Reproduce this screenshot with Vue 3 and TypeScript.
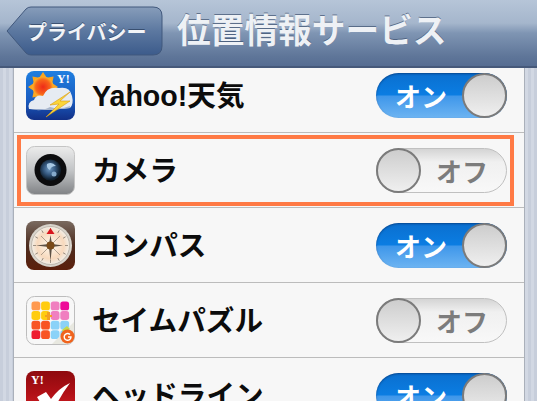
<script setup lang="ts">
type AppRow = { id: string; name: string; on: boolean; active?: boolean }

const rows: AppRow[] = [
  { id: 'weather', name: 'Yahoo!天気', on: true },
  { id: 'camera', name: 'カメラ', on: false, active: true },
  { id: 'compass', name: 'コンパス', on: true },
  { id: 'puzzle', name: 'セイムパズル', on: false },
  { id: 'headline', name: 'ヘッドライン', on: true },
]

const puzzleColors = [
  '#ff9a50', '#ffcc10', '#f07fc0', '#ee0a98',
  '#ffcc10', '#ffcc10', '#f07fc0', '#f07fc0',
  '#f85424', '#f85424', '#8ad2f8', '#8ad2f8',
  '#ee1c30', '#f85424', '#8ad2f8', '#8ad2f8',
]
const sunRays = [0, 45, 90, 135, 180, 225, 270, 315]
const compassTicks = [0, 30, 60, 90, 120, 150, 180, 210, 240, 270, 300, 330]
</script>

<template>
  <div class="screen">
    <header class="navbar">
      <button class="back" type="button">
        <svg class="back-shape" viewBox="0 0 157 50" width="157" height="50">
          <defs>
            <linearGradient id="backFill" x1="0" y1="0" x2="0" y2="1">
              <stop offset="0" stop-color="#879dba" />
              <stop offset="0.5" stop-color="#5c78a0" />
              <stop offset="1" stop-color="#3c5b8b" />
            </linearGradient>
          </defs>
          <path
            d="M1 25 L20 3 Q22 1 25 1 H147 Q156 1 156 10 V40 Q156 49 147 49 H25 Q22 49 20 47 Z"
            fill="url(#backFill)"
            stroke="#41587c"
            stroke-width="1"
          />
        </svg>
        <span class="back-label">プライバシー</span>
      </button>
      <h1 class="title">位置情報サービス</h1>
    </header>

    <div class="viewport">
      <ul class="list">
        <li v-for="row in rows" :key="row.id" class="row" :class="{ 'row-active': row.active }">
          <svg class="icon" viewBox="0 0 49 49" width="49" height="49">
            <template v-if="row.id === 'weather'">
              <defs>
                <linearGradient id="wxSky" x1="0" y1="0" x2="0" y2="1">
                  <stop offset="0" stop-color="#1f7fe0" />
                  <stop offset="0.6" stop-color="#1a5cc0" />
                  <stop offset="1" stop-color="#122f86" />
                </linearGradient>
                <radialGradient id="wxSun">
                  <stop offset="0" stop-color="#ee2a18" />
                  <stop offset="0.7" stop-color="#f8661a" />
                  <stop offset="1" stop-color="#fdb52a" />
                </radialGradient>
              </defs>
              <rect width="49" height="49" rx="8" fill="url(#wxSky)" />
              <g transform="translate(17 16)">
                <path
                  v-for="a in sunRays"
                  :key="a"
                  d="M-4 -9 L0 -15 L4 -9 Z"
                  fill="#fba51e"
                  :transform="`rotate(${a})`"
                />
                <circle r="10.5" fill="url(#wxSun)" />
              </g>
              <path
                d="M3 38 Q1 31 8 29 Q10 23 17 25 Q21 15 33 17 Q44 15 46 25 Q48 33 44 37 L24 39 Z"
                fill="#e6ebf2"
              />
              <path d="M4 38 Q16 41 24 36 Q34 39 44 35 L44 37 L24 39 Z" fill="#a8b6cc" />
              <path d="M44 21 L24 34 L33 33 L20 46 L44 30 L34 30 Z" fill="#fbd53a" stroke="#d89a10" stroke-width="0.6" />
              <text x="31" y="12" class="yahoo-mark">Y!</text>
            </template>

            <template v-else-if="row.id === 'camera'">
              <defs>
                <linearGradient id="camBody" x1="0" y1="0" x2="0" y2="1">
                  <stop offset="0" stop-color="#ececec" />
                  <stop offset="0.5" stop-color="#c2c4c6" />
                  <stop offset="1" stop-color="#808285" />
                </linearGradient>
                <radialGradient id="camLens" cx="0.45" cy="0.45">
                  <stop offset="0" stop-color="#6f9bc4" />
                  <stop offset="0.55" stop-color="#35587f" />
                  <stop offset="1" stop-color="#10202f" />
                </radialGradient>
              </defs>
              <rect x="0.5" y="0.5" width="48" height="48" rx="8" fill="url(#camBody)" stroke="#c4c4c4" />
              <circle cx="24.5" cy="24" r="16" fill="#0c0c0e" />
              <circle cx="24.5" cy="24" r="10.5" fill="url(#camLens)" />
              <path d="M21 18 Q26 15 30 20 Q25 20 24 24 Q20 22 21 18 Z" fill="#a7c8e4" />
              <circle cx="28" cy="28" r="2.5" fill="#86aacb" />
            </template>

            <template v-else-if="row.id === 'compass'">
              <defs>
                <linearGradient id="cmpFrame" x1="0" y1="0" x2="0" y2="1">
                  <stop offset="0" stop-color="#7a6a60" />
                  <stop offset="0.5" stop-color="#4c2c1e" />
                  <stop offset="1" stop-color="#5c200c" />
                </linearGradient>
                <radialGradient id="cmpDial">
                  <stop offset="0" stop-color="#fffaf0" />
                  <stop offset="0.7" stop-color="#f7d9bd" />
                  <stop offset="1" stop-color="#f2efe8" />
                </radialGradient>
              </defs>
              <rect width="49" height="49" rx="8" fill="url(#cmpFrame)" />
              <circle cx="24.5" cy="24.5" r="21.5" fill="#d8d4cc" />
              <circle cx="24.5" cy="24.5" r="19" fill="url(#cmpDial)" stroke="#a89e90" stroke-width="0.6" />
              <line
                v-for="a in compassTicks"
                :key="a"
                x1="24.5"
                y1="7"
                x2="24.5"
                y2="10"
                stroke="#8a7d70"
                stroke-width="0.8"
                :transform="`rotate(${a} 24.5 24.5)`"
              />
              <path d="M24.5 7 L28.5 13 L20.5 13 Z" fill="#d8141c" />
              <path d="M24.5 14 L26 23 L37 24.5 L26 26 L24.5 40 L23 26 L10 24.5 L23 23 Z" fill="#5d5145" />
              <path d="M15 15 L34 34 M34 15 L15 34" stroke="#9a8d7e" stroke-width="0.8" />
              <circle cx="24.5" cy="24.5" r="4" fill="#7a4a18" />
            </template>

            <template v-else-if="row.id === 'puzzle'">
              <rect x="0.5" y="0.5" width="48" height="48" rx="8" fill="#f7f7f7" stroke="#bdbdbd" />
              <rect
                v-for="(color, i) in puzzleColors"
                :key="i"
                :x="5.5 + (i % 4) * 9.6"
                :y="5.5 + Math.floor(i / 4) * 9.6"
                width="8.8"
                height="8.8"
                rx="2.6"
                :fill="color"
              />
              <path d="M21 16 h3 v3 h2 v2 h-2 v3 h-3 v-3 h-2 v-2 h2 Z" fill="#f4a020" />
              <path d="M26 48 L48 26 V40 Q48 48 40 48 Z" fill="#e8e8e0" />
              <path d="M36 34 L41 30 L44 33 L38 38 Z" fill="#c5d84a" />
              <circle cx="41.5" cy="40.5" r="7" fill="#f0641e" />
              <path d="M44 38.5 A3.4 3.4 0 1 0 45 41 H42" fill="none" stroke="#fff" stroke-width="1.4" />
            </template>

            <template v-else>
              <defs>
                <linearGradient id="newsFill" x1="0" y1="0" x2="0" y2="1">
                  <stop offset="0" stop-color="#8e0a0e" />
                  <stop offset="0.45" stop-color="#b01016" />
                  <stop offset="1" stop-color="#e0242a" />
                </linearGradient>
              </defs>
              <rect width="49" height="49" rx="8" fill="url(#newsFill)" />
              <text x="5" y="13" class="yahoo-mark">Y!</text>
              <path d="M11 26 L20 21 L25 28 Q33 17 44 12 Q34 25 27 41 L20 41 Z" fill="#fff" />
            </template>
          </svg>

          <span class="name">{{ row.name }}</span>

          <span class="toggle" :class="row.on ? 'toggle-on' : 'toggle-off'">
            <span class="toggle-text">{{ row.on ? 'オン' : 'オフ' }}</span>
            <span class="knob"></span>
          </span>
        </li>
      </ul>
    </div>
  </div>
</template>

<style>
html,
body {
  margin: 0;
  background: #ccd3df;
}
</style>

<style scoped>
.screen {
  width: 537px;
  height: 401px;
  overflow: hidden;
  display: flex;
  flex-direction: column;
  font-family: "Liberation Sans", "Noto Sans CJK JP", sans-serif;
  background: repeating-linear-gradient(90deg, #c7cedb 0 3px, #d2d8e3 3px 6px);
}

.navbar {
  flex: none;
  height: 68px;
  box-sizing: border-box;
  display: flex;
  align-items: flex-start;
  padding: 6px 0 0 6px;
  gap: 14px;
  border-bottom: 2px solid #46597a;
  background: linear-gradient(#b6c5d8 0%, #a5b6cc 35%, #7f95b3 50%, #5f7699 85%, #566d92 100%);
  position: relative;
  z-index: 1;
}

.back {
  position: relative;
  flex: none;
  width: 157px;
  height: 50px;
  padding: 0 0 0 21px;
  border: 0;
  background: none;
  display: flex;
  align-items: center;
  font-family: inherit;
}

.back-shape {
  position: absolute;
  left: 0;
  top: 0;
}

.back-label {
  position: relative;
  font-size: 20px;
  font-weight: 700;
  color: #f2f4f7;
  text-shadow: 0 -1px 0 rgba(40, 60, 90, 0.7);
  white-space: nowrap;
}

.title {
  margin: 0;
  font-size: 33.7px;
  line-height: 50px;
  font-weight: 700;
  color: #eef1f5;
  text-shadow: 0 -1px 0 rgba(60, 80, 110, 0.7);
  white-space: nowrap;
}

.viewport {
  flex: 1;
  min-height: 0;
  overflow: hidden;
  padding: 0 12px 0 13px;
}

.list {
  list-style: none;
  margin: -10px 0 0;
  padding: 0;
  background: #f7f7f7;
  border-left: 1px solid #aab0ba;
  border-right: 1px solid #aab0ba;
}

.row {
  height: 75px;
  box-sizing: border-box;
  display: flex;
  align-items: center;
  padding: 0 17px 0 12px;
  border-bottom: 1px solid #bcbcbc;
  position: relative;
}

.row-active::after {
  content: "";
  position: absolute;
  left: 3px;
  right: 10px;
  top: 2px;
  bottom: 1px;
  border: 4px solid #ff7a45;
  pointer-events: none;
}

.icon {
  flex: none;
  display: block;
}

.name {
  margin: 0 0 3px 17px;
  flex: 1;
  font-size: 28.6px;
  font-weight: 700;
  color: #0c0c0c;
  white-space: nowrap;
}

.toggle {
  flex: none;
  width: 131px;
  height: 45px;
  box-sizing: border-box;
  border-radius: 23px;
  display: flex;
  align-items: center;
  position: relative;
  font-size: 26px;
  font-weight: 700;
}

.toggle-on {
  background: linear-gradient(#0a6fcf 0%, #0b7de2 48%, #3f97ea 52%, #6db4f2 100%);
  color: #fff;
  box-shadow: inset 0 1px 2px rgba(0, 30, 80, 0.5);
}

.toggle-off {
  background: linear-gradient(#d4d4d4 0%, #f0f0f0 30%, #f8f8f8 100%);
  border: 1px solid #c0c0c0;
  color: #7c7c7c;
}

.toggle-text {
  position: absolute;
  top: 50%;
  transform: translateY(-50%);
  white-space: nowrap;
}

.toggle-on .toggle-text {
  left: 19px;
}

.toggle-off .toggle-text {
  right: 18px;
}

.knob {
  position: absolute;
  top: 0;
  width: 45px;
  height: 45px;
  box-sizing: border-box;
  border-radius: 50%;
  border: 2px solid #7b7b7b;
  background: linear-gradient(#cdcdcd, #efefef);
}

.toggle-on .knob {
  right: 0;
}

.toggle-off .knob {
  left: -1px;
  top: -1px;
}

.yahoo-mark {
  font-family: "Liberation Serif", serif;
  font-size: 12px;
  font-weight: 700;
  fill: #fff;
}
</style>
